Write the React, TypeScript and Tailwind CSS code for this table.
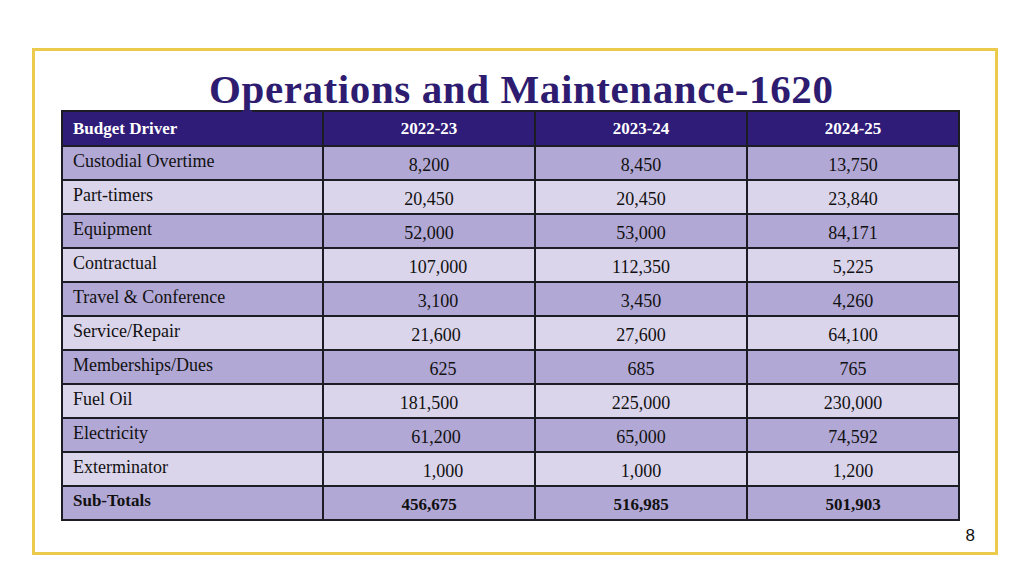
import React from "react";

type Row = { name: string; vals: [string, string, string]; off?: [string, string, string]; bold?: boolean };

const rows: Row[] = [
  { name: "Custodial Overtime", vals: ["8,200", "8,450", "13,750"] },
  { name: "Part-timers", vals: ["20,450", "20,450", "23,840"] },
  { name: "Equipment", vals: ["52,000", "53,000", "84,171"] },
  { name: "Contractual", vals: ["107,000", "112,350", "5,225"], off: ["pl-[18px]", "", ""] },
  { name: "Travel & Conference", vals: ["3,100", "3,450", "4,260"], off: ["pl-[18px]", "", ""] },
  { name: "Service/Repair", vals: ["21,600", "27,600", "64,100"], off: ["pl-[14px]", "", ""] },
  { name: "Memberships/Dues", vals: ["625", "685", "765"], off: ["pl-[28px]", "", ""] },
  { name: "Fuel Oil", vals: ["181,500", "225,000", "230,000"] },
  { name: "Electricity", vals: ["61,200", "65,000", "74,592"], off: ["pl-[14px]", "", ""] },
  { name: "Exterminator", vals: ["1,000", "1,000", "1,200"], off: ["pl-[28px]", "", ""] },
  { name: "Sub-Totals", vals: ["456,675", "516,985", "501,903"], bold: true },
];

export default function App() {
  return (
    <div
      className="w-[1024px] h-[576px] bg-white pt-[48px] pl-[32px]"
      style={{ fontFamily: '"Liberation Serif", "Times New Roman", serif' }}
    >
      <div className="relative w-[966px] h-[507px] border-[3px] border-[#ecca4c] pl-[26px]">
        <h1 className="h-[59px] pt-[16px] pl-[148px] text-[41px] leading-[44px] font-bold text-[#2e1c70] tracking-[0.6px] whitespace-nowrap">
          Operations and Maintenance-1620
        </h1>
        <table className="border-collapse text-[18px] text-[#111]">
          <thead>
            <tr className="h-[35px] bg-[#2f1b78] text-white font-bold">
              <td className="w-[261px] border-2 border-[#1c1c24] pl-[10px] text-[17px] align-middle">Budget Driver</td>
              <td className="w-[212px] border-2 border-[#1c1c24] text-center text-[17px]">2022-23</td>
              <td className="w-[212px] border-2 border-[#1c1c24] text-center text-[17px]">2023-24</td>
              <td className="w-[212px] border-2 border-[#1c1c24] text-center text-[17px]">2024-25</td>
            </tr>
          </thead>
          <tbody>
            {rows.map((r, i) => (
              <tr
                key={r.name}
                className={`h-[34px] ${i % 2 === 0 ? "bg-[#b2a8d5]" : "bg-[#dbd5eb]"} ${r.bold ? "font-bold text-[17px]" : ""}`}
              >
                <td className="border-2 border-[#1c1c24] pl-[10px] align-top pt-[3px] leading-[22px]">{r.name}</td>
                {r.vals.map((v, j) => (
                  <td
                    key={j}
                    className={`border-2 border-[#1c1c24] text-center align-middle pt-[3px] leading-[22px] ${r.off ? r.off[j] : ""}`}
                  >
                    {v}
                  </td>
                ))}
              </tr>
            ))}
          </tbody>
        </table>
        <div
          className="absolute right-[20px] bottom-[4px] text-[17px] text-[#111]"
          style={{ fontFamily: '"Liberation Sans", Arial, sans-serif' }}
        >
          8
        </div>
      </div>
    </div>
  );
}
